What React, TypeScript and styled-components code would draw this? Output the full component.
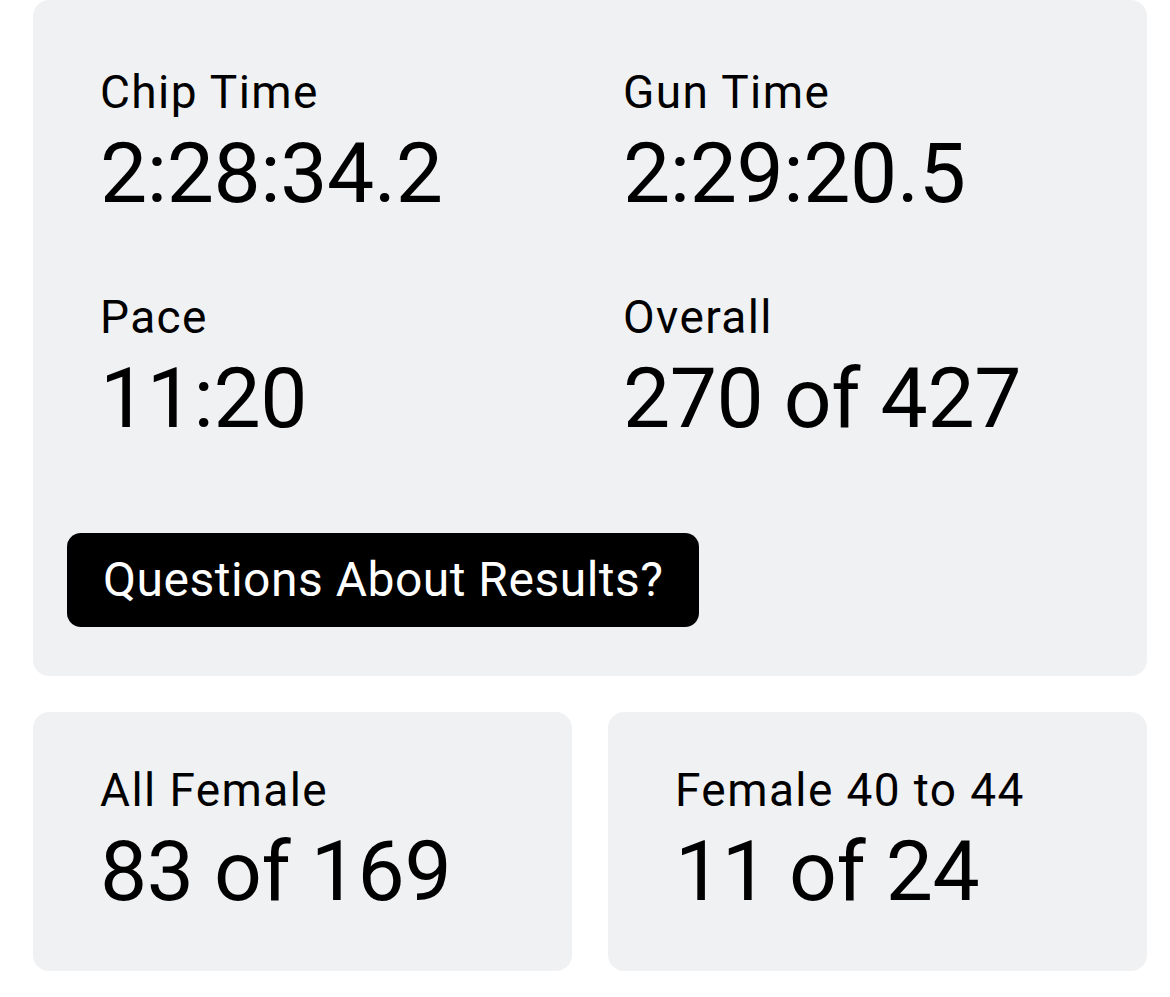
import React from 'react';
import styled, { createGlobalStyle } from 'styled-components';

const GlobalStyle = createGlobalStyle`
  * {
    box-sizing: border-box;
  }

  body {
    margin: 0;
    background-color: #ffffff;
    font-family: Roboto, 'Noto Sans', Arial, sans-serif;
    color: #000000;
  }
`;

type Stat = {
  label: string;
  value: string;
};

const mainStats: Stat[] = [
  { label: 'Chip Time', value: '2:28:34.2' },
  { label: 'Gun Time', value: '2:29:20.5' },
  { label: 'Pace', value: '11:20' },
  { label: 'Overall', value: '270 of 427' },
];

const placeStats: Stat[] = [
  { label: 'All Female', value: '83 of 169' },
  { label: 'Female 40 to 44', value: '11 of 24' },
];

const App = () => {
  return (
    <>
      <GlobalStyle />
      <S.Page>
        <S.ResultCard>
          <S.StatsGrid>
            {mainStats.map((stat) => (
              <S.StatCell key={stat.label}>
                <S.Label>{stat.label}</S.Label>
                <S.Value>{stat.value}</S.Value>
              </S.StatCell>
            ))}
          </S.StatsGrid>
          <S.QuestionButton type="button">Questions About Results?</S.QuestionButton>
        </S.ResultCard>

        <S.PlaceRow>
          {placeStats.map((stat) => (
            <S.PlaceCard key={stat.label}>
              <S.Label>{stat.label}</S.Label>
              <S.Value>{stat.value}</S.Value>
            </S.PlaceCard>
          ))}
        </S.PlaceRow>
      </S.Page>
    </>
  );
};

export default App;

const S = {
  Page: styled.div`
    display: flex;
    flex-direction: column;
    gap: 36px;

    padding: 0 23px 0 33px;
  `,

  ResultCard: styled.section`
    display: flex;
    flex-direction: column;
    align-items: flex-start;

    padding: 65px 34px 49px;
    border-radius: 16px;

    background-color: #f0f1f3;
  `,

  StatsGrid: styled.div`
    display: grid;
    grid-template-columns: 1fr 1fr;
    row-gap: 67px;

    width: 100%;
  `,

  StatCell: styled.div`
    display: flex;
    flex-direction: column;

    padding-left: 33px;
  `,

  Label: styled.div`
    font-size: 46px;
    line-height: 54px;
    font-weight: 400;
    letter-spacing: 1.4px;
    white-space: nowrap;
  `,

  Value: styled.div`
    margin-top: 6px;

    font-size: 84px;
    line-height: 98px;
    font-weight: 400;
    letter-spacing: -0.4px;
    white-space: nowrap;
  `,

  QuestionButton: styled.button`
    margin-top: 85px;
    padding: 19px 36px;
    border: none;
    border-radius: 14px;

    background-color: #000000;
    color: #ffffff;

    font-family: Roboto, 'Noto Sans', Arial, sans-serif;
    font-size: 48px;
    line-height: 56px;
    font-weight: 400;
    letter-spacing: 0.5px;

    cursor: pointer;
  `,

  PlaceRow: styled.div`
    display: grid;
    grid-template-columns: 1fr 1fr;
    gap: 36px;
  `,

  PlaceCard: styled.div`
    display: flex;
    flex-direction: column;

    padding: 51px 67px 50px;
    border-radius: 16px;

    background-color: #f0f1f3;
  `,
};
